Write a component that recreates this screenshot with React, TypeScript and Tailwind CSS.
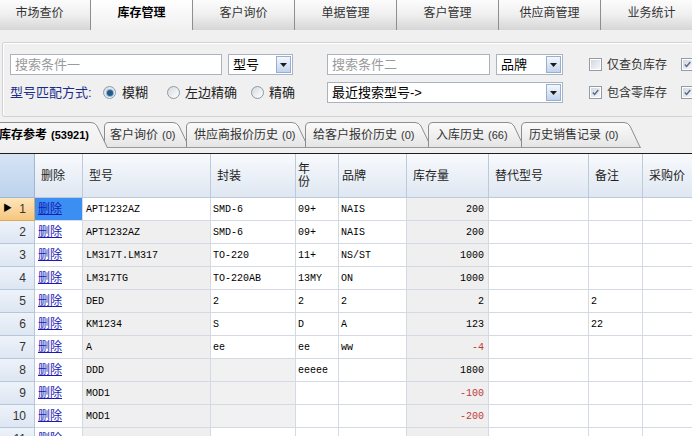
import React from 'react'

const topTabs = ['市场查价', '库存管理', '客户询价', '单据管理', '客户管理', '供应商管理', '业务统计']

const subTabs = [
  { label: '库存参考', count: '(53921)', w: 'w-[118px]', active: true, pad: 'pl-[9px]' },
  { label: '客户询价', count: '(0)', w: 'w-[86px]', active: false, pad: 'pl-[6px]' },
  { label: '供应商报价历史', count: '(0)', w: 'w-[123px]', active: false, pad: 'pl-[8px]' },
  { label: '给客户报价历史', count: '(0)', w: 'w-[127px]', active: false, pad: 'pl-[8px]' },
  { label: '入库历史', count: '(66)', w: 'w-[97px]', active: false, pad: 'pl-[8px]' },
  { label: '历史销售记录', count: '(0)', w: 'w-[120px]', active: false, pad: 'pl-[8px]' },
]
const subTabPx = [118, 86, 123, 127, 97, 120]

const cols = 'grid-cols-[35px_48px_128px_85px_43px_68px_82px_100px_54px_70px]'

type Row = [string, string, string, string, string, string]
const rows: Row[] = [
  ['APT1232AZ', 'SMD-6', '09+', 'NAIS', '200', ''],
  ['APT1232AZ', 'SMD-6', '09+', 'NAIS', '200', ''],
  ['LM317T.LM317', 'TO-220', '11+', 'NS/ST', '1000', ''],
  ['LM317TG', 'TO-220AB', '13MY', 'ON', '1000', ''],
  ['DED', '2', '2', '2', '2', '2'],
  ['KM1234', 'S', 'D', 'A', '123', '22'],
  ['A', 'ee', 'ee', 'ww', '-4', ''],
  ['DDD', '', 'eeeee', '', '1800', ''],
  ['MOD1', '', '', '', '-100', ''],
  ['MOD1', '', '', '', '-200', ''],
  ['', '', '', '', '', ''],
]

const mono = "font-['Liberation_Mono','Noto_Sans_CJK_SC',monospace]"

function DropBtn() {
  return (
    <div className="flex h-[17px] w-[15px] items-center justify-center border border-[#98aed2] bg-linear-to-b from-[#f4f8fd] to-[#c2d3ec]">
      <svg width="7" height="4" viewBox="0 0 7 4">
        <path d="M0 0h7L3.5 4z" fill="#1a1a1a" />
      </svg>
    </div>
  )
}

function Select({ text, className }: { text: string; className: string }) {
  return (
    <div className={`flex h-[21px] items-center justify-between border border-[#aab4c0] bg-white pl-[4px] pr-[1px] ${className}`}>
      <span className="text-[13px] leading-none text-black">{text}</span>
      <DropBtn />
    </div>
  )
}

function Radio({ checked }: { checked?: boolean }) {
  return (
    <span className="flex h-[13px] w-[13px] items-center justify-center rounded-full border border-[#8e99a6] bg-linear-to-br from-[#d6d9dd] to-white">
      {checked && <span className="h-[6px] w-[6px] rounded-full bg-[#235a8c] ring-1 ring-[#8fb4d6]" />}
    </span>
  )
}

function Check({ checked }: { checked?: boolean }) {
  return (
    <span className="flex h-[13px] w-[13px] shrink-0 items-center justify-center border border-[#939ca6] bg-white">
      <span className="flex h-[9px] w-[9px] items-center justify-center bg-linear-to-br from-[#d3d8de] to-[#f5f6f8]">
        {checked && (
          <svg width="7" height="7" viewBox="0 0 7 7">
            <path d="M0.8 3.6L2.6 5.4L6.3 1" stroke="#55698a" strokeWidth="1.4" fill="none" />
          </svg>
        )}
      </span>
    </span>
  )
}

function SubTab({ i }: { i: number }) {
  const t = subTabs[i]
  const w = subTabPx[i]
  const d = `M0.5 26 L0.5 5 Q0.5 0.5 5 0.5 L${w - 17} 0.5 Q${w - 13} 0.5 ${w - 11} 4 L${w - 0.5} 26`
  return (
    <div className={`relative h-[26px] shrink-0 ${t.w} ${i > 0 ? '-ml-[4px]' : ''} ${t.active ? 'z-10' : ''}`}>
      <svg className="absolute inset-0" width={w} height={26}>
        <defs>
          <linearGradient id={`g${i}`} x1="0" y1="0" x2="0" y2="1">
            <stop offset="0" stopColor={t.active ? '#f6f6f6' : '#fbfbfb'} />
            <stop offset="1" stopColor={t.active ? '#f0f0f0' : '#e4e4e4'} />
          </linearGradient>
        </defs>
        <path d={d + (t.active ? '' : ' Z')} fill={`url(#g${i})`} stroke="#8d8d8d" />
        {!t.active && <path d={`M0 25.5H${w}`} stroke="#9a9a9a" />}
      </svg>
      <div className={`relative flex h-full items-center ${t.pad} text-[12px] ${t.active ? 'font-bold text-black' : 'text-[#333]'}`}>
        <span>{t.label}</span>
        <span className="ml-[4px] text-[11px]">{t.count}</span>
      </div>
    </div>
  )
}

export default function App() {
  return (
    <div className="h-[436px] w-[692px] overflow-hidden bg-[#f0f0f0] font-['Liberation_Sans','Noto_Sans_CJK_SC',sans-serif] text-[12px] text-[#222]">
      {/* top module tabs */}
      <div className="-ml-[11px] flex h-[30px]">
        {topTabs.map((t, i) => (
          <div
            key={t}
            className={`flex h-[30px] w-[102px] shrink-0 items-center justify-center border-r border-[#8e8e8e] pb-[4px] text-[12px] ${
              i === 1
                ? 'bg-linear-to-b from-white to-[#f0f0f0] font-bold text-black'
                : 'bg-linear-to-b from-[#fcfcfc] via-[#efefef] to-[#d6d6d6] text-[#333]'
            }`}
          >
            {t}
          </div>
        ))}
      </div>

      {/* search panel */}
      <div className="px-[2px] pt-[12px]">
        <div className="h-[75px] w-[720px] rounded-[2px] border border-[#d2d2d2] pl-[7px] pt-[11px] shadow-[inset_1px_1px_0_#fff]">
          <div className="flex h-[21px] items-center">
            <div className="flex w-[317px] items-center">
              <div className="flex h-[21px] w-[212px] items-center border border-[#aab4c0] bg-white pl-[4px] text-[13px] text-[#9a9a9a]">
                搜索条件一
              </div>
              <Select text="型号" className="ml-[6px] w-[65px]" />
            </div>
            <div className="flex h-[21px] w-[163px] items-center border border-[#aab4c0] bg-white pl-[4px] text-[13px] text-[#9a9a9a]">
              搜索条件二
            </div>
            <Select text="品牌" className="ml-[6px] w-[67px]" />
            <div className="ml-[26px] flex items-center">
              <Check />
              <span className="ml-[5px] text-[12px] text-[#333]">仅查负库存</span>
            </div>
            <div className="ml-[14px]">
              <Check checked />
            </div>
          </div>
          <div className="mt-[7px] flex h-[21px] items-center">
            <div className="flex w-[317px] items-center text-[13px]">
              <span className="w-[93px] text-[#1b2d8a]">型号匹配方式:</span>
              <Radio checked />
              <span className="ml-[6px] w-[45px] text-[#222]">模糊</span>
              <Radio />
              <span className="ml-[5px] w-[66px] text-[#222]">左边精确</span>
              <Radio />
              <span className="ml-[5px] text-[#222]">精确</span>
            </div>
            <Select text="最近搜索型号->" className="w-[236px]" />
            <div className="ml-[26px] flex items-center">
              <Check checked />
              <span className="ml-[5px] text-[12px] text-[#333]">包含零库存</span>
            </div>
            <div className="ml-[14px]">
              <Check checked />
            </div>
          </div>
        </div>
      </div>

      {/* sub tabs */}
      <div className="-ml-[10px] flex h-[36px] pt-[5px]">
        {subTabs.map((t, i) => (
          <SubTab key={t.label} i={i} />
        ))}
      </div>

      {/* grid */}
      <div className="w-[713px] border-t border-[#1e1e1e]">
        <div className={`grid ${cols} h-[44px] text-[12px] text-[#222]`}>
          <div className="border-r border-b border-[#9fb6d3] bg-linear-to-b from-[#d6e4f4] to-[#bcd2ed]" />
          {['删除', '型号', '封装', '', '品牌', '库存量', '替代型号', '备注', '采购价'].map((h, i) => (
            <div
              key={i}
              className={`flex items-center border-r border-b border-[#bccbdc] bg-linear-to-b from-[#f8fafd] to-[#dfe7f1] ${
                i === 3 ? 'pl-[2px] leading-[13px]' : i === 4 ? 'pl-[3px]' : 'pl-[6px]'
              }`}
            >
              {i === 3 ? (
                <span>
                  年<br />份
                </span>
              ) : (
                h
              )}
            </div>
          ))}
        </div>
        {rows.map((r, idx) => {
          const first = idx === 0
          const neg = r[4].startsWith('-')
          const greyPkg = idx >= 7 && idx <= 9
          return (
            <div key={idx} className={`grid ${cols} h-[23px]`}>
              <div
                className={`flex items-center justify-between border-r border-b pl-[3px] pr-[8px] text-[12px] ${
                  first
                    ? 'border-[#d6a860] bg-linear-to-b from-[#fde6bb] to-[#f6c67c]'
                    : 'border-[#b7c7db] bg-linear-to-b from-[#eef3fa] to-[#dde6f2]'
                }`}
              >
                <span className="text-[9px] text-black">{first ? '▶' : ''}</span>
                <span className="text-[#333]">{idx + 1}</span>
              </div>
              <div className={`flex items-center border-r border-b border-[#d3dae3] pl-[3px] ${first ? 'bg-[#3b8ff2]' : 'bg-white'}`}>
                <span className="text-[12px] text-[#1a1ab8] underline">删除</span>
              </div>
              <div className={`flex items-center border-r border-b border-[#d3dae3] pl-[3px] ${mono} text-[10px] text-black ${first ? 'bg-white' : 'bg-[#efefef]'}`}>
                {r[0]}
              </div>
              <div className={`flex items-center border-r border-b border-[#d3dae3] pl-[2px] ${mono} text-[10px] text-black ${greyPkg ? 'bg-[#f1f1f1]' : 'bg-white'}`}>
                {r[1]}
              </div>
              <div className={`flex items-center border-r border-b border-[#d3dae3] bg-white pl-[2px] ${mono} text-[10px] text-black`}>
                {r[2]}
              </div>
              <div className={`flex items-center border-r border-b border-[#d3dae3] bg-white pl-[2px] ${mono} text-[10px] text-black`}>
                {r[3]}
              </div>
              <div
                className={`flex items-center justify-end border-r border-b border-[#d3dae3] bg-[#efefef] pr-[4px] ${mono} text-[10px] ${
                  neg ? 'text-[#c03a3a]' : 'text-black'
                }`}
              >
                {r[4]}
              </div>
              <div className="border-r border-b border-[#d3dae3] bg-white" />
              <div className={`flex items-center border-r border-b border-[#d3dae3] bg-white pl-[2px] ${mono} text-[10px] text-black`}>
                {r[5]}
              </div>
              <div className="border-r border-b border-[#d3dae3] bg-white" />
            </div>
          )
        })}
      </div>
    </div>
  )
}
